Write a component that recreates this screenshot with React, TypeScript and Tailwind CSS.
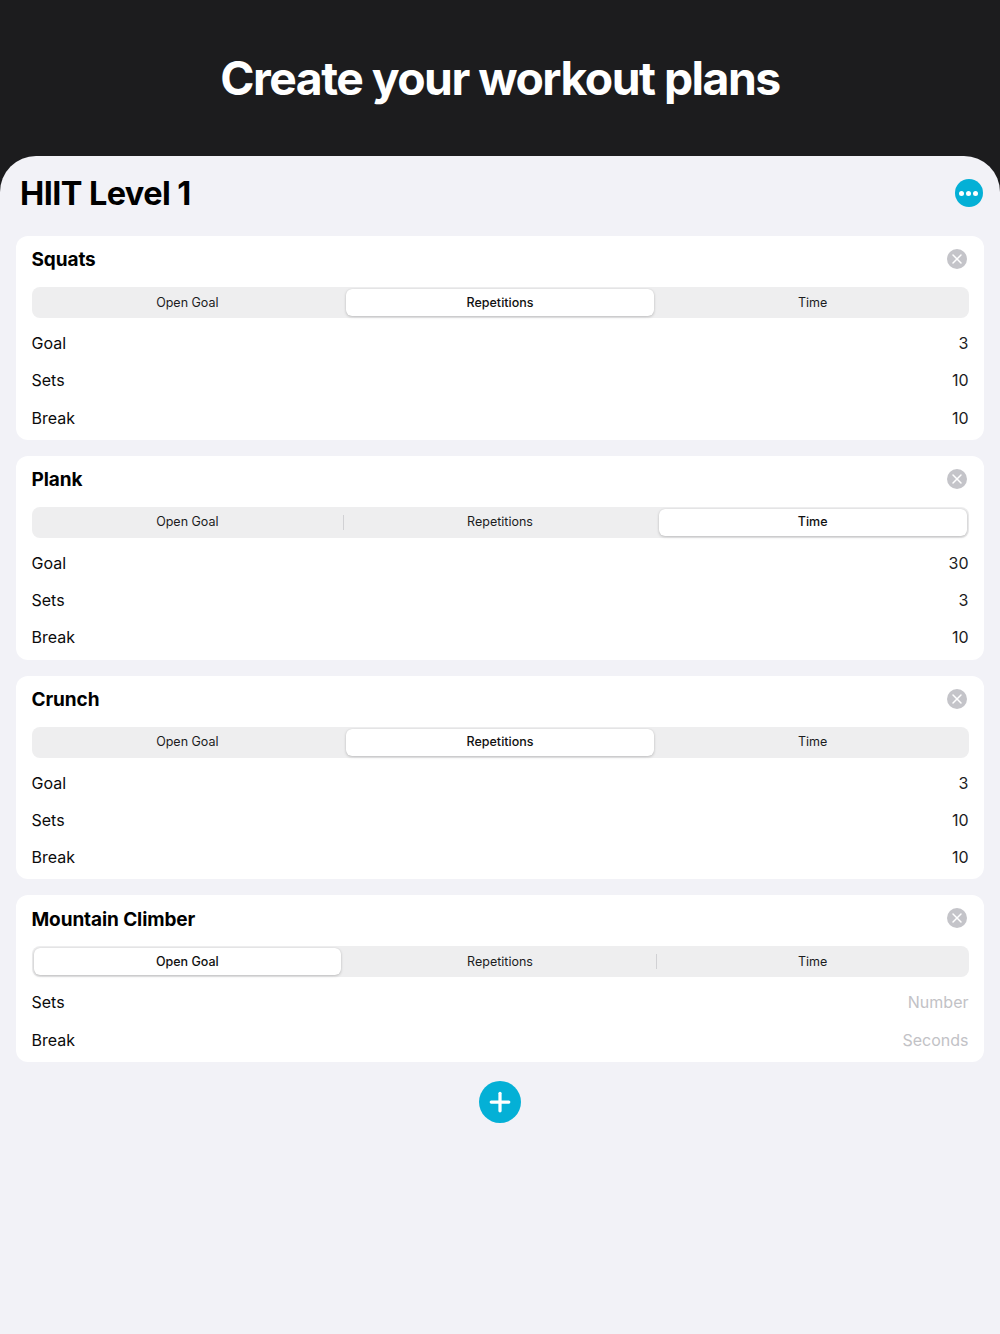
import { X, Plus } from 'lucide-react'

type Row = { label: string; value: string; placeholder?: boolean }
type Exercise = { name: string; active: number; rows: Row[] }

const segments = ['Open Goal', 'Repetitions', 'Time']

const exercises: Exercise[] = [
  {
    name: 'Squats',
    active: 1,
    rows: [
      { label: 'Goal', value: '3' },
      { label: 'Sets', value: '10' },
      { label: 'Break', value: '10' },
    ],
  },
  {
    name: 'Plank',
    active: 2,
    rows: [
      { label: 'Goal', value: '30' },
      { label: 'Sets', value: '3' },
      { label: 'Break', value: '10' },
    ],
  },
  {
    name: 'Crunch',
    active: 1,
    rows: [
      { label: 'Goal', value: '3' },
      { label: 'Sets', value: '10' },
      { label: 'Break', value: '10' },
    ],
  },
  {
    name: 'Mountain Climber',
    active: 0,
    rows: [
      { label: 'Sets', value: 'Number', placeholder: true },
      { label: 'Break', value: 'Seconds', placeholder: true },
    ],
  },
]

const SegmentedControl = ({ active }: { active: number }) => {
  return (
    <div className="mx-[15.5px] mt-[4px] flex h-[31px] rounded-[8px] bg-[#eeeeef] p-[2px]">
      {segments.map((segment, i) => {
        const isActive = i === active
        const showDivider = i < 2 && i !== active && i + 1 !== active
        return (
          <div key={segment} className="relative flex-1 px-[2.5px] first:pl-0 last:pr-0">
            <div
              className={
                isActive
                  ? 'flex h-full items-center justify-center rounded-[6px] bg-white pt-px text-[12.5px] font-medium text-[#111] shadow-[0_1px_3px_rgba(0,0,0,0.2),0_0_1px_rgba(0,0,0,0.12)]'
                  : 'flex h-full items-center justify-center pt-px text-[12.5px] text-[#1c1c1e]'
              }
            >
              {segment}
            </div>
            {showDivider && <div className="absolute right-[-0.5px] top-[6px] h-[15px] w-px bg-[#d1d1d4]" />}
          </div>
        )
      })}
    </div>
  )
}

const ExerciseCard = ({ exercise }: { exercise: Exercise }) => {
  return (
    <div className="rounded-[12px] bg-white pb-[3.5px]">
      <div className="flex h-[47px] items-center justify-between pl-[15.5px] pr-[17px]">
        <span className="pt-[2px] text-[19px] font-bold tracking-[-0.1px] text-black">{exercise.name}</span>
        <span className="mb-px flex h-[20px] w-[20px] items-center justify-center rounded-full bg-[#c4c4c9]">
          <X size={16} strokeWidth={2.2} className="text-white" />
        </span>
      </div>
      <SegmentedControl active={exercise.active} />
      <div className="mt-[6.5px]">
        {exercise.rows.map((row) => (
          <div key={row.label} className="flex h-[37.25px] items-center justify-between px-[15.5px] text-[16px]">
            <span className="text-[#0b0b0b]">{row.label}</span>
            <span className={row.placeholder ? 'text-[#c2c2c6]' : 'text-[#1c1c1e]'}>{row.value}</span>
          </div>
        ))}
      </div>
    </div>
  )
}

export default function App() {
  return (
    <div className="flex min-h-[1334px] flex-col bg-[#1c1c1e] font-['Inter',sans-serif]">
      <div className="flex h-[156px] items-center justify-center pt-[2px]">
        <h1 className="text-[46.3px] font-bold tracking-[-1.5px] text-white">Create your workout plans</h1>
      </div>
      <div className="flex h-[1178px] flex-col rounded-t-[36px] bg-[#f2f2f7] px-[16px]">
        <div className="flex h-[80px] items-center justify-between pl-[4px] pr-[1.5px] pb-[6px]">
          <span className="pt-[3px] text-[32.5px] font-bold tracking-[-0.6px] text-black">HIIT Level 1</span>
          <span className="flex h-[28px] w-[28px] items-center justify-center gap-[2px] rounded-full bg-[#04b0d6]">
            <i className="h-[5px] w-[5px] rounded-full bg-white" />
            <i className="h-[5px] w-[5px] rounded-full bg-white" />
            <i className="h-[5px] w-[5px] rounded-full bg-white" />
          </span>
        </div>
        <div className="flex flex-col gap-[16px]">
          {exercises.map((exercise) => (
            <ExerciseCard key={exercise.name} exercise={exercise} />
          ))}
        </div>
        <div className="mt-[19px] flex justify-center">
          <span className="flex h-[42px] w-[42px] items-center justify-center rounded-full bg-[#04b0d6]">
            <Plus size={30} strokeWidth={2.6} className="text-white" />
          </span>
        </div>
      </div>
    </div>
  )
}
